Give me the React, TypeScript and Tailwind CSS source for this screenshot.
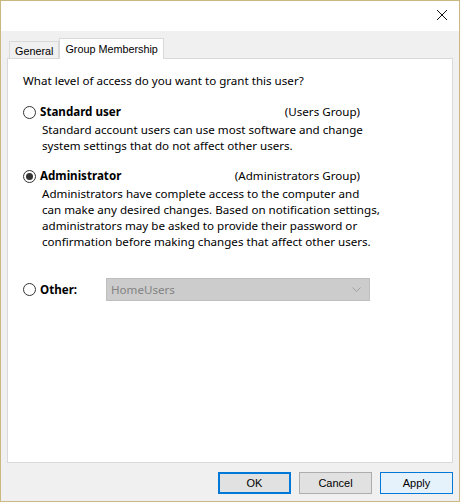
import React from 'react';

const ui = { fontFamily: '"Noto Sans", "Open Sans", sans-serif' };
const classic = { fontFamily: '"Liberation Sans", Arial, sans-serif' };

const Radio = ({ checked }: { checked?: boolean }) => (
  <span className="w-[13px] h-[13px] rounded-full border border-[#333333] bg-white flex items-center justify-center shrink-0">
    {checked && <span className="w-[7px] h-[7px] rounded-full bg-[#333333]" />}
  </span>
);

export default function App() {
  return (
    <div className="w-[460px] h-[502px] border border-[#cbb780] bg-[#f0f0f0] flex flex-col text-black overflow-hidden">
      {/* Title bar */}
      <div className="h-[30px] bg-white flex justify-end items-start shrink-0">
        <svg width="12" height="12" viewBox="0 0 12 12" className="mt-[8px] mr-[11px]">
          <path d="M1 1 L11 11 M11 1 L1 11" stroke="#111" strokeWidth="1" />
        </svg>
      </div>

      {/* Tabs */}
      <div className="flex items-end pl-[8px] mt-[7px] h-[20px] shrink-0 text-[10.8px]" style={classic}>
        <div className="h-[17px] px-[5px] border border-b-0 border-[#d9d9d9] bg-[#f0f0f0] flex items-center pt-[2px]">
          General
        </div>
        <div className="h-[21px] -mb-[1px] relative z-10 px-[5px] border border-b-0 border-[#d9d9d9] bg-white flex items-center">
          Group Membership
        </div>
      </div>

      {/* Panel */}
      <div className="ml-[6px] w-[446px] h-[405px] border border-[#d9d9d9] bg-white shrink-0 pl-[15px] pt-[14px] text-[11.6px] leading-[16px]" style={ui}>
        <div>What level of access do you want to grant this user?</div>

        <div className="mt-[15px] w-[337px] flex items-center justify-between">
          <label className="flex items-center gap-[4px] font-bold">
            <Radio />
            Standard user
          </label>
          <span>(Users Group)</span>
        </div>
        <div className="mt-[2px] pl-[19px]">
          Standard account users can use most software and change
          <br />
          system settings that do not affect other users.
        </div>

        <div className="mt-[14px] w-[337px] flex items-center justify-between">
          <label className="flex items-center gap-[4px] font-bold">
            <Radio checked />
            Administrator
          </label>
          <span>(Administrators Group)</span>
        </div>
        <div className="mt-[2px] pl-[19px]">
          Administrators have complete access to the computer and
          <br />
          can make any desired changes. Based on notification settings,
          <br />
          administrators may be asked to provide their password or
          <br />
          confirmation before making changes that affect other users.
        </div>

        <div className="mt-[28px] flex items-center">
          <label className="flex items-center gap-[4px] font-bold w-[83px]">
            <Radio />
            Other:
          </label>
          <div className="w-[264px] h-[23px] border border-[#bfbfbf] bg-[#cccccc] flex items-center justify-between pl-[4px] pr-[8px] text-[#838383]">
            <span>HomeUsers</span>
            <svg width="9" height="6" viewBox="0 0 9 6">
              <path d="M0.5 0.5 L4.5 4.5 L8.5 0.5" stroke="#a0a0a0" fill="none" strokeWidth="1" />
            </svg>
          </div>
        </div>
      </div>

      {/* Buttons */}
      <div className="flex justify-end gap-[8px] pr-[6px] mt-[9px] text-[11px]" style={classic}>
        <button className="w-[73px] h-[22px] border-2 border-[#0078d7] bg-[#e1e1e1] flex items-center justify-center">
          OK
        </button>
        <button className="w-[73px] h-[22px] border border-[#adadad] bg-[#e1e1e1] flex items-center justify-center">
          Cancel
        </button>
        <button className="w-[73px] h-[22px] border border-[#0078d7] bg-[#e5f1fb] flex items-center justify-center">
          Apply
        </button>
      </div>
    </div>
  );
}
